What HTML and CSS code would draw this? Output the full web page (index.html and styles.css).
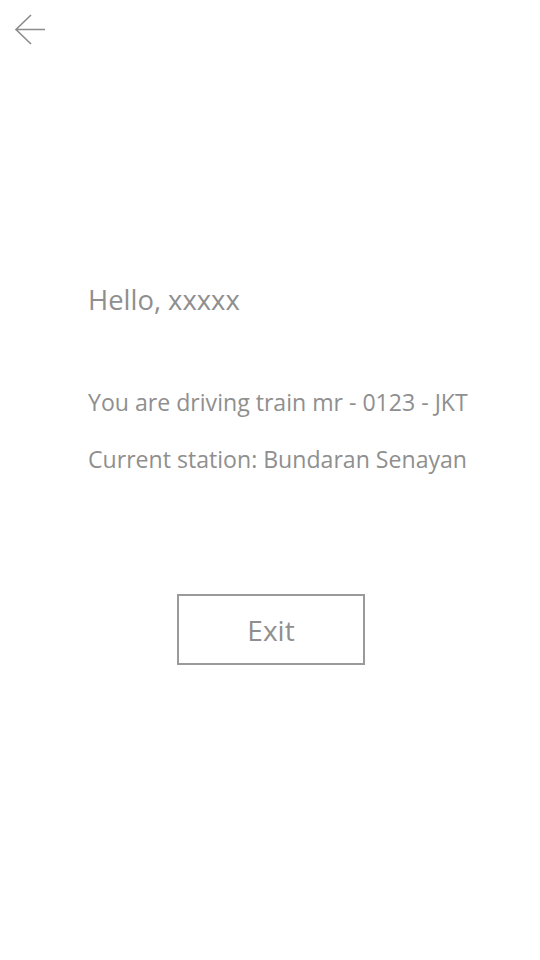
FILE: index.html
```html
<!DOCTYPE html>
<html>
<head>
<meta charset="utf-8">
<link rel="stylesheet" href="styles.css">
</head>
<body>
<div class="page">
  <header class="topbar">
    <button class="back" aria-label="Back">
      <svg width="32" height="32" viewBox="0 0 32 32"><path d="M17 1 L2 15.5 L17 30 M2 15.5 H31" fill="none" stroke="#8c8c8c" stroke-width="1.6"/></svg>
    </button>
  </header>
  <main class="content">
    <h1 class="hello">Hello, xxxxx</h1>
    <p class="line first">You are driving train mr - 0123 - JKT</p>
    <p class="line">Current station: Bundaran Senayan</p>
    <div class="actions">
      <button class="exit">Exit</button>
    </div>
  </main>
</div>
</body>
</html>
```
FILE: styles.css
```css
html, body {
  margin: 0;
  padding: 0;
  background: #ffffff;
}
body {
  font-family: "Open Sans", "Noto Sans", sans-serif;
  color: #8f8f8f;
  width: 540px;
  height: 960px;
}
.topbar {
  height: 60px;
  padding: 14px 0 0 14px;
  box-sizing: border-box;
}
.back {
  border: 0;
  background: none;
  padding: 0;
  width: 32px;
  height: 32px;
  display: block;
}
.back svg { display: block; }
.content {
  padding: 218px 0 0 88px;
}
.hello {
  margin: 0;
  font-size: 27.4px;
  font-weight: 400;
  line-height: 44px;
}
.line {
  margin: 0;
  font-size: 23.1px;
  line-height: 32px;
}
.line.first { margin-top: 64px; }
.line + .line { margin-top: 25px; }
.actions {
  margin-top: 119px;
  padding-left: 89px;
}
.exit {
  width: 188px;
  height: 71px;
  border: 2px solid #9a9a9a;
  background: #fff;
  font-family: inherit;
  font-size: 28px;
  color: #8f8f8f;
  padding: 0;
}
```
